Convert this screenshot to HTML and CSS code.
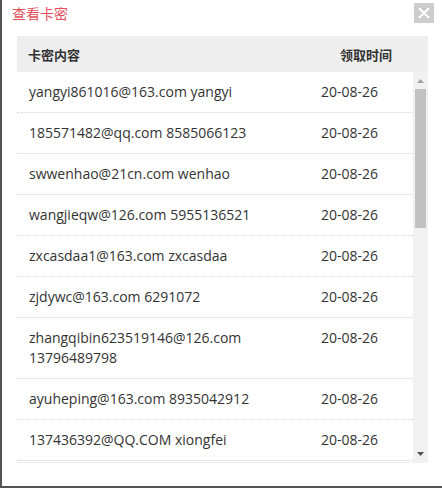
FILE: index.html
```html
<!DOCTYPE html>
<html lang="zh-CN">
<head>
  <meta charset="UTF-8">
  <title>查看卡密</title>
  <link rel="stylesheet" href="styles.css">
</head>
<body>
  <div class="dialog">
    <div class="dialog-head">
      <span class="dialog-title">查看卡密</span>
      <span class="dialog-close">
        <svg width="14" height="14" viewBox="0 0 14 14"><path d="M2 2L12 12M12 2L2 12" stroke="#fff" stroke-width="2"/></svg>
      </span>
    </div>

    <div class="card-table">
      <div class="thead">
        <div class="col-content">卡密内容</div>
        <div class="col-time">领取时间</div>
      </div>
      <div class="tbody-wrap">
        <div class="tbody">
          <div class="row"><div class="col-content">yangyi861016@163.com yangyi</div><div class="col-time">20-08-26</div></div>
          <div class="row"><div class="col-content">185571482@qq.com 8585066123</div><div class="col-time">20-08-26</div></div>
          <div class="row"><div class="col-content">swwenhao@21cn.com wenhao</div><div class="col-time">20-08-26</div></div>
          <div class="row"><div class="col-content">wangjieqw@126.com 5955136521</div><div class="col-time">20-08-26</div></div>
          <div class="row"><div class="col-content">zxcasdaa1@163.com zxcasdaa</div><div class="col-time">20-08-26</div></div>
          <div class="row"><div class="col-content">zjdywc@163.com 6291072</div><div class="col-time">20-08-26</div></div>
          <div class="row"><div class="col-content">zhangqibin623519146@126.com 13796489798</div><div class="col-time">20-08-26</div></div>
          <div class="row"><div class="col-content">ayuheping@163.com 8935042912</div><div class="col-time">20-08-26</div></div>
          <div class="row"><div class="col-content">137436392@QQ.COM xiongfei</div><div class="col-time">20-08-26</div></div>
        </div>
        <div class="scrollbar">
          <div class="scroll-btn">
            <svg width="7" height="4" viewBox="0 0 7 4"><path d="M0 4L3.5 0L7 4Z" fill="#a3a3a3"/></svg>
          </div>
          <div class="scroll-track"><div class="scroll-thumb"></div></div>
          <div class="scroll-btn">
            <svg width="7" height="4" viewBox="0 0 7 4"><path d="M0 0L3.5 4L7 0Z" fill="#505050"/></svg>
          </div>
        </div>
      </div>
    </div>
  </div>
</body>
</html>
```

FILE: styles.css
```css
html, body {
  margin: 0;
  height: 100%;
}
body {
  font-family: "Open Sans", "Noto Sans CJK SC", sans-serif;
  font-size: 14px;
  color: #333;
  background: #fff;
}
.dialog {
  box-sizing: border-box;
  height: 488px;
  border-left: 2px solid #555;
  border-bottom: 2px solid #555;
  padding: 0 14px 0 15px;
}
.dialog-head {
  display: flex;
  justify-content: space-between;
  align-items: flex-start;
  height: 36px;
  margin-left: -5px;
}
.dialog-title {
  font-family: "Noto Sans CJK SC", sans-serif;
  color: #e5505a;
  line-height: 26px;
}
.dialog-close {
  display: flex;
  align-items: center;
  justify-content: center;
  width: 20px;
  height: 20px;
  margin-top: 3px;
  margin-right: -6px;
  background: #cdcdcd;
}
.card-table {
  border-bottom: 1px solid #f0f0f0;
}
.thead {
  display: grid;
  grid-template-columns: 1fr 88px;
  height: 36px;
  align-items: center;
  background: #eee;
  font-family: "Noto Sans CJK SC", sans-serif;
  font-size: 13px;
  font-weight: bold;
}
.thead .col-content {
  padding-left: 11px;
}
.tbody-wrap {
  display: flex;
  height: 390px;
}
.tbody {
  flex: 1;
  overflow: hidden;
}
.row {
  display: grid;
  grid-template-columns: 1fr 92px;
  padding: 10px 0;
  line-height: 20px;
  border-bottom: 1px dotted #d8d8d8;
}
.row .col-content {
  padding-left: 12px;
  padding-right: 40px;
}

/* classic scrollbar with arrow buttons */
.scrollbar {
  display: flex;
  flex-direction: column;
  width: 15px;
  background: #f1f1f1;
}
.scroll-btn {
  display: flex;
  align-items: center;
  justify-content: center;
  height: 17px;
}
.scroll-track {
  flex: 1;
}
.scroll-thumb {
  height: 139px;
  margin: 0 2px;
  background: #c1c1c1;
}
```
